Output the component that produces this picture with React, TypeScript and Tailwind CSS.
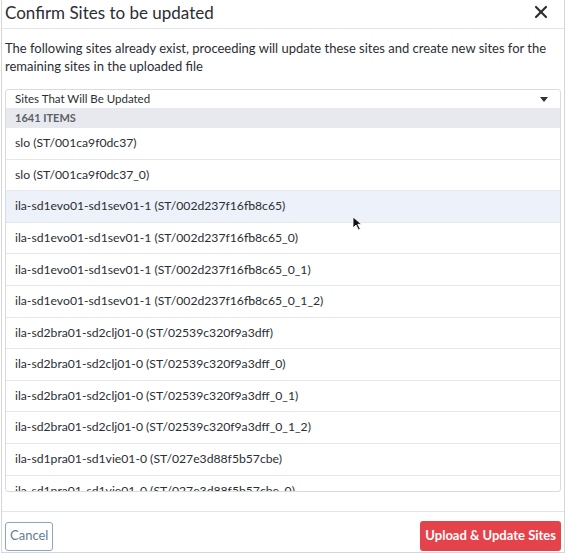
import { X } from 'lucide-react';

const rows = [
  'slo (ST/001ca9f0dc37)',
  'slo (ST/001ca9f0dc37_0)',
  'ila-sd1evo01-sd1sev01-1 (ST/002d237f16fb8c65)',
  'ila-sd1evo01-sd1sev01-1 (ST/002d237f16fb8c65_0)',
  'ila-sd1evo01-sd1sev01-1 (ST/002d237f16fb8c65_0_1)',
  'ila-sd1evo01-sd1sev01-1 (ST/002d237f16fb8c65_0_1_2)',
  'ila-sd2bra01-sd2clj01-0 (ST/02539c320f9a3dff)',
  'ila-sd2bra01-sd2clj01-0 (ST/02539c320f9a3dff_0)',
  'ila-sd2bra01-sd2clj01-0 (ST/02539c320f9a3dff_0_1)',
  'ila-sd2bra01-sd2clj01-0 (ST/02539c320f9a3dff_0_1_2)',
  'ila-sd1pra01-sd1vie01-0 (ST/027e3d88f5b57cbe)',
  'ila-sd1pra01-sd1vie01-0 (ST/027e3d88f5b57cbe_0)',
];

export default function App() {
  return (
    <div className="w-[568px] h-[556px] bg-white overflow-hidden relative" style={{ fontFamily: 'Lato, "Open Sans", sans-serif' }}>
      <div className="ml-[1px] w-[564px] h-[553px] border-x border-b border-[#d4d6da] flex flex-col">
        <div className="h-[29px] flex items-center justify-between pl-[3px] pr-[13px] pb-[4px] border-b border-[#e3e4e8]">
          <h2 className="text-[17px] text-[#2b2e33] leading-none">Confirm Sites to be updated</h2>
          <X size={20} strokeWidth={2.6} className="text-[#2b2e33]" />
        </div>

        <div className="px-[3px] pt-[10px]">
          <p className="text-[13px] leading-[18px] text-[#2b2e33]">
            The following sites already exist, proceeding will update these sites and create new sites for the remaining sites in the uploaded file
          </p>

          <div className="mt-[14px] w-[556px] h-[403px] border border-[#d9dbdf] rounded-[3px] overflow-hidden">
            <div className="h-[18px] flex items-center justify-between pl-[9px] pr-[12px]">
              <span className="text-[11.5px] text-[#2b2e33]">Sites That Will Be Updated</span>
              <svg width="8" height="5" viewBox="0 0 8 5"><path d="M0 0h8L4 5z" fill="#333" /></svg>
            </div>
            <div className="h-[20px] bg-[#e8e9ee] flex items-center pl-[9px] text-[11px] font-bold text-[#5b5f66]">
              1641 ITEMS
            </div>
            {rows.map((r, i) => (
              <div
                key={i}
                className={`h-[31.6px] shrink-0 flex items-center pl-[9px] border-b border-[#e6e7ea] text-[12.2px] text-[#2b2e33] ${i === 2 ? 'bg-[#edf1f9]' : ''}`}
              >
                {r}
              </div>
            ))}
          </div>
        </div>

        <div className="mt-[19px] border-t border-[#e3e4e8] flex items-center justify-between px-[3px] pt-[9px]">
          <button className="h-[29px] px-[4px] border border-[#8fa6b8] rounded-[3px] text-[13px] text-[#5f7d93]">Cancel</button>
          <button className="h-[30px] px-[5px] rounded-[3px] bg-[#e5434b] text-white text-[13px] font-bold">Upload &amp; Update Sites</button>
        </div>
      </div>

      <svg className="absolute left-[352px] top-[216px]" width="10" height="15" viewBox="0 0 10 15">
        <path d="M1 1v11l3-3 2.5 5 1.8-.9-2.5-4.8H9.5z" fill="#111" stroke="#fff" strokeWidth="0.8" />
      </svg>
    </div>
  );
}
